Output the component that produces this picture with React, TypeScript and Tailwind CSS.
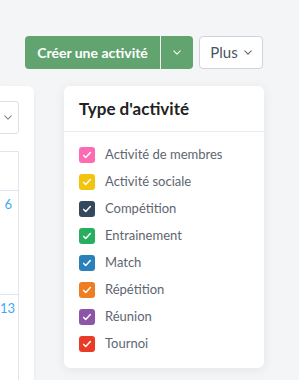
import React from "react";

const types = [
  { label: "Activité de membres", color: "bg-[#fd6bb4]" },
  { label: "Activité sociale", color: "bg-[#f2c40f]" },
  { label: "Compétition", color: "bg-[#34495e]" },
  { label: "Entrainement", color: "bg-[#27ae60]" },
  { label: "Match", color: "bg-[#2a80b9]" },
  { label: "Répétition", color: "bg-[#ef7e23]" },
  { label: "Réunion", color: "bg-[#8e54a7]" },
  { label: "Tournoi", color: "bg-[#ea3b26]" },
];

const Chevron = ({ className }: { className?: string }) => (
  <svg viewBox="0 0 10 6" className={className} fill="none" stroke="currentColor" strokeWidth="1.3" strokeLinecap="round" strokeLinejoin="round">
    <path d="M1 1l4 4 4-4" />
  </svg>
);

const Check = () => (
  <svg viewBox="0 0 12 12" className="w-[10px] h-[10px]" fill="none" stroke="white" strokeWidth="1.8" strokeLinecap="round" strokeLinejoin="round">
    <path d="M2 6.5l2.5 2.5L10 3" />
  </svg>
);

export default function App() {
  return (
    <div className="h-[380px] w-[299px] overflow-hidden bg-[#f4f5f7] font-['Lato',sans-serif]">
      {/* Toolbar */}
      <div className="flex justify-end pt-[36px] pr-[36px]">
        <div className="flex h-[33px] rounded-[4px] bg-[#62a46f] text-white">
          <button className="w-[135px] text-[14px] font-bold">Créer une activité</button>
          <div className="w-px bg-white/90" />
          <button className="flex w-[32px] items-center justify-center">
            <Chevron className="w-[8px] h-[5px]" />
          </button>
        </div>
        <button className="ml-[6px] flex h-[33px] w-[64px] items-center justify-center gap-[6px] rounded-[4px] border border-[#cfd4da] bg-white text-[15px] text-[#4a5462]">
          Plus
          <Chevron className="w-[8px] h-[5px] text-[#5b6470]" />
        </button>
      </div>

      <div className="mt-[17px] flex gap-[30px]">
        {/* Left card (cut off) */}
        <div className="h-[300px] w-[34px] rounded-tr-[6px] bg-white shadow-[0_1px_4px_rgba(0,0,0,0.05)]">
          <div className="mt-[15px] mr-[15px] flex h-[33px] items-center rounded-r-[4px] border border-l-0 border-[#dde3ea] pl-[4px]">
            <Chevron className="w-[8px] h-[5px] text-[#7c8590]" />
          </div>
          <div className="mt-[17px] mr-[15px] border-t border-r border-[#dde5ee]">
            <div className="h-[38px]" />
            <div className="h-[104px] border-t border-[#dde5ee] pr-[6px] pt-[4px] text-right text-[13px] text-[#3fa9f5]">6</div>
            <div className="h-[104px] border-t border-[#dde5ee] pr-[5px] pt-[4px] text-right text-[13px] text-[#3fa9f5]">13</div>
          </div>
        </div>

        {/* Dropdown panel */}
        <div className="h-[282px] w-[200px] rounded-[6px] bg-white shadow-[0_2px_12px_rgba(0,0,0,0.07)]">
          <div className="flex h-[46px] items-center border-b border-[#e8ecf0] px-[15px] text-[17px] font-bold text-[#222]">
            Type d'activité
          </div>
          <ul className="flex flex-col gap-[11px] px-[15px] pt-[15px]">
            {types.map((t) => (
              <li key={t.label} className="flex h-[16px] items-center gap-[10px] text-[13px] text-[#5d6670]">
                <span className={`flex h-[16px] w-[16px] items-center justify-center rounded-[3px] ${t.color}`}>
                  <Check />
                </span>
                {t.label}
              </li>
            ))}
          </ul>
        </div>
      </div>
    </div>
  );
}
